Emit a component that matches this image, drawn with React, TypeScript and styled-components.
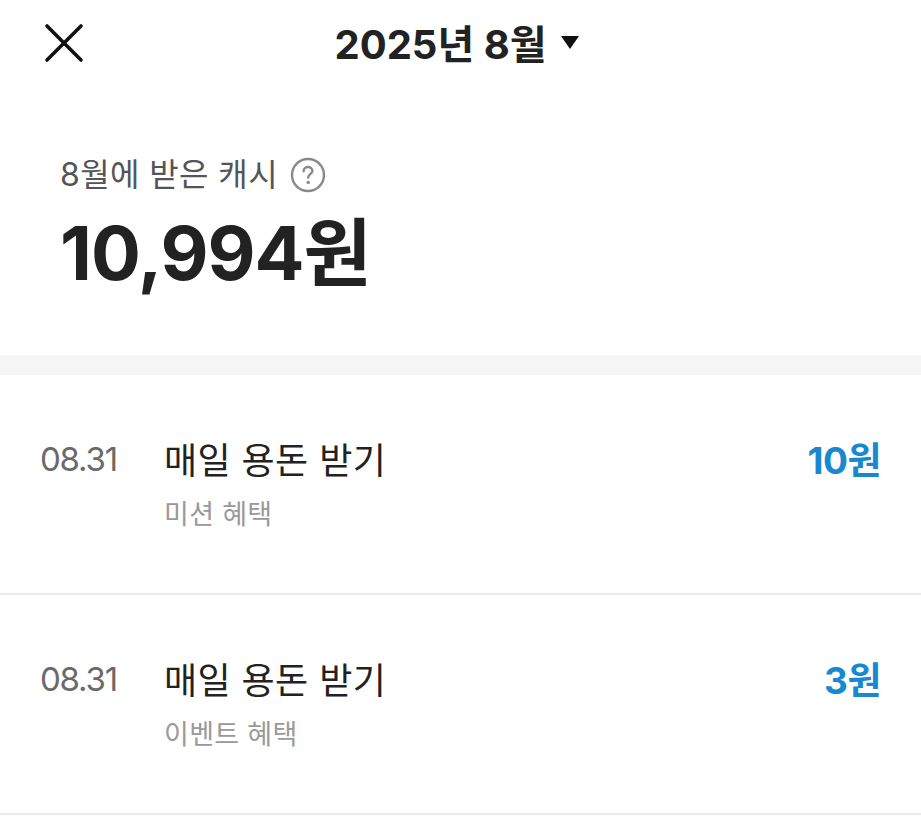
import React, { ReactElement } from 'react';
import styled, { createGlobalStyle } from 'styled-components';

const GlobalStyle = createGlobalStyle`
  html, body {
    margin: 0;
    padding: 0;
    background: #ffffff;
  }

  body {
    font-family: Inter, 'Noto Sans CJK KR', 'Noto Sans', sans-serif;
    color: #222222;
  }
`;

const Page = styled.div`
  width: 921px;
  min-height: 835px;
  background: #ffffff;
  overflow: hidden;
`;

const Header = styled.header`
  position: relative;
  height: 86px;
  display: flex;
  align-items: center;
  justify-content: center;
`;

const CloseButton = styled.button`
  position: absolute;
  left: 40px;
  top: 19px;
  width: 48px;
  height: 48px;
  padding: 0;
  border: none;
  background: none;
  display: flex;
  align-items: center;
  justify-content: center;
`;

const MonthPicker = styled.div`
  display: flex;
  align-items: center;
  gap: 14px;
  margin-top: -2px;
  margin-left: -8px;
  font-size: 40px;
  font-weight: 700;
  color: #222222;
`;

const Summary = styled.section`
  padding: 69px 60px 57px;
`;

const SummaryLabel = styled.div`
  display: flex;
  align-items: center;
  gap: 12px;
  font-size: 32px;
  letter-spacing: 0.4px;
  color: #555555;
  line-height: 40px;
`;

const SummaryAmount = styled.div`
  margin-top: 13px;
  font-size: 74px;
  font-weight: 700;
  line-height: 90px;
  letter-spacing: -1px;
  color: #222222;
`;

const Band = styled.div`
  height: 20px;
  background: #f6f6f6;
`;

const List = styled.ul`
  list-style: none;
  margin: 0;
  padding: 0;
`;

const Row = styled.li`
  display: flex;
  align-items: flex-start;
  height: 220px;
  box-sizing: border-box;
  padding: 60px 40px 0;
  border-bottom: 2px solid #ebebeb;
`;

const RowDate = styled.span`
  width: 124px;
  flex-shrink: 0;
  font-size: 33px;
  line-height: 48px;
  color: #6a6a6a;
  letter-spacing: -1.2px;
`;

const RowBody = styled.div`
  flex: 1;
  display: flex;
  flex-direction: column;
  gap: 10px;
`;

const RowTitle = styled.span`
  font-size: 36px;
  line-height: 52px;
  letter-spacing: 0.4px;
  color: #222222;
`;

const RowSub = styled.span`
  font-size: 27px;
  line-height: 36px;
  letter-spacing: 0.3px;
  color: #999999;
`;

const RowAmount = styled.span`
  font-size: 37px;
  font-weight: 700;
  line-height: 52px;
  color: #1a88d0;
  letter-spacing: -0.5px;
`;

const entries = [
  { date: '08.31', title: '매일 용돈 받기', sub: '미션 혜택', amount: '10원' },
  { date: '08.31', title: '매일 용돈 받기', sub: '이벤트 혜택', amount: '3원' },
];

const App = (): ReactElement => (
  <Page>
    <GlobalStyle />
    <Header>
      <CloseButton aria-label="닫기">
        <svg width="40" height="40" viewBox="0 0 40 40">
          <path d="M3 3 L37 37 M37 3 L3 37" stroke="#111" strokeWidth="3.6" strokeLinecap="round" />
        </svg>
      </CloseButton>
      <MonthPicker>
        2025년 8월
        <svg width="18" height="13" viewBox="0 0 18 13">
          <path d="M0 0 H18 L9 13 Z" fill="#111" />
        </svg>
      </MonthPicker>
    </Header>

    <Summary>
      <SummaryLabel>
        8월에 받은 캐시
        <svg width="36" height="36" viewBox="0 0 36 36">
          <circle cx="18" cy="18" r="16" fill="none" stroke="#8a8a8a" strokeWidth="2.4" />
          <path
            d="M13.6 14.2 C13.6 11.6 15.6 10 18 10 C20.5 10 22.4 11.6 22.4 13.9 C22.4 16.9 18.2 17 18.2 20.6"
            fill="none"
            stroke="#8a8a8a"
            strokeWidth="2.4"
            strokeLinecap="round"
          />
          <circle cx="18.2" cy="25.4" r="1.7" fill="#8a8a8a" />
        </svg>
      </SummaryLabel>
      <SummaryAmount>10,994원</SummaryAmount>
    </Summary>

    <Band />

    <List>
      {entries.map((e, i) => (
        <Row key={i}>
          <RowDate>{e.date}</RowDate>
          <RowBody>
            <RowTitle>{e.title}</RowTitle>
            <RowSub>{e.sub}</RowSub>
          </RowBody>
          <RowAmount>{e.amount}</RowAmount>
        </Row>
      ))}
    </List>
  </Page>
);

export default App;
